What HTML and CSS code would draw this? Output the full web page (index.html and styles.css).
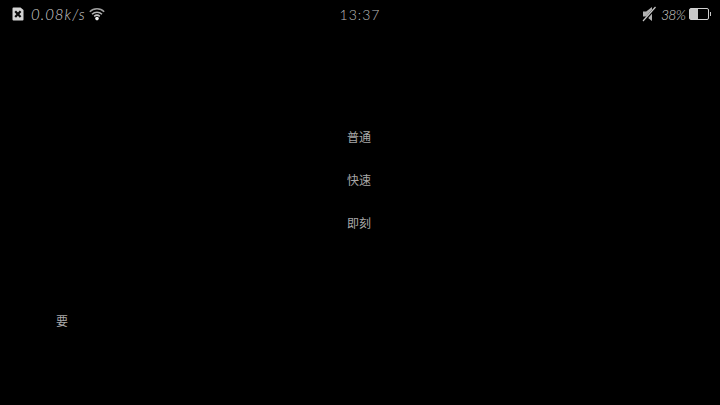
FILE: index.html
```html
<!DOCTYPE html>
<html lang="zh-CN">
<head>
  <meta charset="UTF-8" />
  <title>快速</title>
  <link rel="stylesheet" href="styles.css">
</head>
<body>
  <div class="statusbar">
    <div class="status-left">
      <svg class="icon-sim" width="12" height="14" viewBox="0 0 12 14">
        <path d="M1.5 0.5h7l3 2.5v9.5a1 1 0 0 1-1 1h-9a1 1 0 0 1-1-1v-11a1 1 0 0 1 1-1z" fill="#d4d4d4"/>
        <path d="M3.2 4.2l5.4 5.8M8.6 4.2L3.2 10" stroke="#0c0c0c" stroke-width="2.2"/>
      </svg>
      <span class="speed">0.08k/s</span>
      <svg class="icon-wifi" width="16" height="14" viewBox="0 0 16 14">
        <path d="M0.8 4.8a10.2 10.2 0 0 1 14.4 0" fill="none" stroke="#a0a0a0" stroke-width="1.5"/>
        <path d="M3 7.2a7.2 7.2 0 0 1 10 0" fill="none" stroke="#b4b4b4" stroke-width="1.5"/>
        <path d="M5.2 9.4a4.2 4.2 0 0 1 5.6 0" fill="none" stroke="#c8c8c8" stroke-width="1.5"/>
        <circle cx="8" cy="11.6" r="1.8" fill="#f0f0f0"/>
      </svg>
    </div>
    <div class="clock">13:37</div>
    <div class="status-right">
      <svg class="icon-mute" width="14" height="16" viewBox="0 0 14 16">
        <path d="M1 5.5h3.2L10 1v14L4.2 10.5H1z" fill="#b0b0b0"/>
        <path d="M13.5 1.5L1.5 15.5" stroke="#000" stroke-width="2.6"/>
        <path d="M13.5 1L1 15" stroke="#c8c8c8" stroke-width="1.2"/>
      </svg>
      <span class="battery-pct">38%</span>
      <div class="battery">
        <div class="battery-level"></div>
      </div>
      <div class="battery-tip"></div>
    </div>
  </div>

  <div class="menu">
    <div class="menu-item">普通</div>
    <div class="menu-item">快速</div>
    <div class="menu-item">即刻</div>
  </div>

  <div class="footer-label">要</div>
</body>
</html>
```

FILE: styles.css
```css
html, body {
  margin: 0;
  padding: 0;
  height: 100%;
  background: #000;
  overflow: hidden;
}
body {
  font-family: "Noto Sans CJK SC", sans-serif;
  color: #a8a8a8;
}
.statusbar {
  display: flex;
  justify-content: space-between;
  align-items: center;
  height: 28px;
  padding: 0 9px 0 12px;
  position: relative;
  font-family: "Lato", sans-serif;
  font-weight: 300;
  font-style: italic;
  font-size: 15px;
  color: #d0d0d0;
}
.status-left, .status-right {
  display: flex;
  align-items: center;
}
.speed {
  margin-left: 7px;
  letter-spacing: 1px;
}
.icon-wifi {
  margin-left: 3px;
}
.clock {
  position: absolute;
  left: 0;
  right: 0;
  text-align: center;
  font-style: normal;
  font-size: 14px;
  letter-spacing: 1px;
  color: #bcbcbc;
}
.battery-pct {
  margin-left: 5px;
  font-size: 14px;
  letter-spacing: -0.8px;
}
.battery {
  width: 17px;
  height: 10px;
  margin-left: 4px;
  border: 1px solid #d0d0d0;
  border-radius: 2px;
  padding: 0 1px 0 0;
}
.battery-level {
  width: 8px;
  height: 100%;
  background: #c8c8c8;
}
.battery-tip {
  width: 1px;
  height: 4px;
  margin-left: 1px;
  background: #c8c8c8;
}
.menu {
  display: flex;
  flex-direction: column;
  align-items: center;
  margin-top: 100px;
  padding-right: 2px;
  gap: 25px;
}
.menu-item {
  font-size: 12px;
  line-height: 18px;
}
.footer-label {
  margin: 80px 0 0 56px;
  font-size: 12px;
  line-height: 18px;
}
```
